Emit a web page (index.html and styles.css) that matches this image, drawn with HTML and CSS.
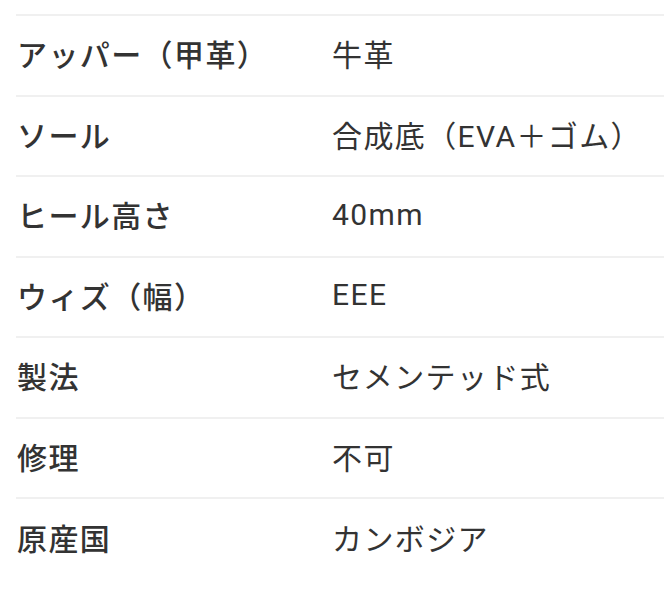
FILE: index.html
```html
<!DOCTYPE html>
<html lang="ja">
<head>
<meta charset="utf-8">
<link rel="stylesheet" href="styles.css">
</head>
<body>
<table class="spec">
  <tbody>
    <tr><th>アッパー（甲革）</th><td>牛革</td></tr>
    <tr><th>ソール</th><td>合成底（EVA＋ゴム）</td></tr>
    <tr><th>ヒール高さ</th><td>40mm</td></tr>
    <tr><th>ウィズ（幅）</th><td>EEE</td></tr>
    <tr><th>製法</th><td>セメンテッド式</td></tr>
    <tr><th>修理</th><td>不可</td></tr>
    <tr><th>原産国</th><td>カンボジア</td></tr>
  </tbody>
</table>
</body>
</html>
```
FILE: styles.css
```css
html, body {
  margin: 0;
  padding: 0;
  background: #fff;
}
body {
  padding: 14px 0 0 16px;
  font-family: Roboto, "Noto Sans CJK JP", sans-serif;
  color: #333;
}
.spec {
  width: 648px;
  border-collapse: collapse;
  font-size: 30px;
  letter-spacing: 1.4px;
}
.spec tr {
  border-top: 2px solid #f0f0f0;
  height: 80.5px;
}
.spec th {
  width: 315px;
  padding: 0 0 4px 1px;
  text-align: left;
  font-weight: 500;
  vertical-align: middle;
}
.spec td {
  padding: 0 0 4px 0;
  font-weight: 400;
  vertical-align: middle;
}
```
